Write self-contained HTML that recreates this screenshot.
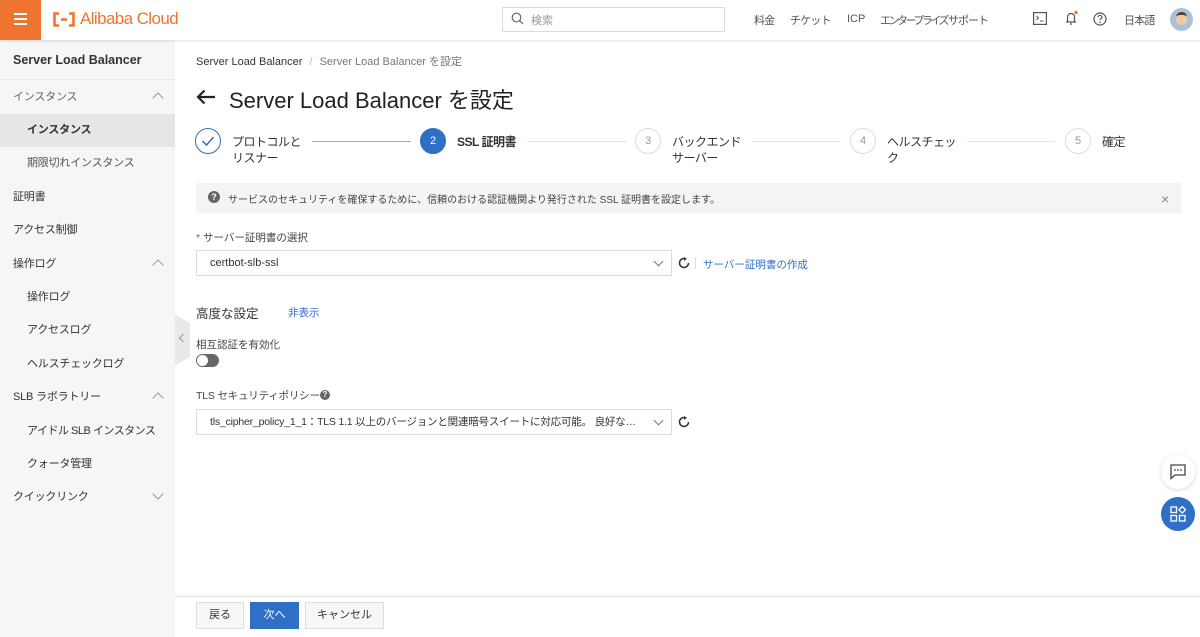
<!DOCTYPE html>
<html><head><meta charset="utf-8"><style>
*{box-sizing:border-box;margin:0;padding:0}
body{width:1200px;height:637px;overflow:hidden;position:relative;background:#fff;font-family:"Liberation Sans","Noto Sans CJK JP",sans-serif;color:#333;font-size:12px}
.a{position:absolute;white-space:nowrap}
.hdr{position:absolute;left:0;top:0;width:1200px;height:40px;background:#fff;box-shadow:0 1px 3px rgba(0,0,0,.12);z-index:5}
.nv{position:absolute;top:12px;font-size:11px;color:#555;letter-spacing:-0.8px;white-space:nowrap}
.side{position:absolute;left:0;top:40px;width:175px;height:597px;background:#f5f6f7}
.mi{position:absolute;left:0;width:175px;height:33px;line-height:33px;padding-left:13px;font-size:11px;letter-spacing:-0.2px;color:#333;white-space:nowrap}
.mi.s{padding-left:27px}
.chev{position:absolute;right:13px;top:13px;width:8px;height:8px;border-left:1px solid #999;border-top:1px solid #999;transform:rotate(45deg)}
.chev.d{transform:rotate(225deg);top:9px}
.circ{position:absolute;width:26px;height:26px;border-radius:50%;border:1px solid #ddd;color:#999;font-size:11px;text-align:center;line-height:24px;top:128px}
.st{position:absolute;font-size:12px;letter-spacing:-0.5px;color:#333;line-height:16px;top:134px;white-space:nowrap}
.ln{position:absolute;height:1px;top:141px;background:#e3e3e3}
.sel{position:absolute;left:196px;width:476px;height:26px;border:1px solid #dcdcdc;font-size:11px;line-height:24px;padding-left:13px;padding-right:30px;color:#333;white-space:nowrap;overflow:hidden;text-overflow:ellipsis}
.sel .v{position:absolute;right:9px;top:7px;width:7px;height:7px;border-right:1px solid #777;border-bottom:1px solid #777;transform:rotate(45deg)}
.btn{position:absolute;top:602px;height:27px;line-height:25px;text-align:center;border:1px solid #ddd;background:#f7f7f7;font-size:11px;color:#333}
</style></head><body>
<div class="hdr">
 <div class="a" style="left:0;top:0;width:41px;height:40px;background:#ef7430"></div>
 <div class="a" style="left:14px;top:13px;width:13px;height:2px;background:#fff;box-shadow:0 5px 0 #fff,0 10px 0 #fff"></div>
 <svg class="a" style="left:52px;top:12px" width="24" height="15" viewBox="0 0 24 15"><path d="M7 1.5H2.5v12H7M17 1.5h4.5v12H17M9 7.5h6" stroke="#ef7430" stroke-width="2.6" fill="none"/></svg>
 <div class="a" style="left:80px;top:9px;color:#ef7430;font-size:17px;letter-spacing:-0.6px">Alibaba Cloud</div>
 <div class="a" style="left:502px;top:7px;width:223px;height:25px;border:1px solid #ddd"></div>
 <svg class="a" style="left:511px;top:12px" width="13" height="13" viewBox="0 0 13 13"><circle cx="5.5" cy="5.5" r="4.3" fill="none" stroke="#666" stroke-width="1.2"/><path d="M8.7 8.7L12 12" stroke="#666" stroke-width="1.2"/></svg>
 <div class="a" style="left:531px;top:12px;color:#999;font-size:11px">検索</div>
 <div class="nv" style="left:754px">料金</div>
 <div class="nv" style="left:790px">チケット</div>
 <div class="nv" style="left:847px;letter-spacing:0;top:13px">ICP</div>
 <div class="nv" style="left:880px;letter-spacing:-2.5px">エンタープライズ</div>
 <div class="nv" style="left:948px;letter-spacing:-1px">サポート</div>
 <svg class="a" style="left:1033px;top:12px" width="14" height="13" viewBox="0 0 14 13"><rect x=".6" y=".6" width="12.8" height="11.8" fill="none" stroke="#555" stroke-width="1.2"/><path d="M3.5 4l2 2-2 2M7 9h3.5" stroke="#555" fill="none"/></svg>
 <svg class="a" style="left:1063px;top:10px" width="16" height="16" viewBox="0 0 16 16"><path d="M3 12h10M4.5 12V7a3.5 3.5 0 017 0v5M7 14h2" stroke="#555" fill="none" stroke-width="1.2"/><circle cx="13" cy="2.5" r="1.7" fill="#ef7430"/></svg>
 <svg class="a" style="left:1093px;top:12px" width="14" height="14" viewBox="0 0 14 14"><circle cx="7" cy="7" r="6" fill="none" stroke="#555" stroke-width="1.2"/><path d="M5 5.3a2 2 0 114 0c0 1.2-2 1.4-2 2.8" stroke="#555" fill="none" stroke-width="1.2"/><circle cx="7" cy="10.3" r=".8" fill="#555"/></svg>
 <div class="nv" style="left:1124px">日本語</div>
 <div class="a" style="left:1170px;top:8px;width:23px;height:23px;border-radius:50%;background:#a9c2d6;overflow:hidden"><div style="position:absolute;left:6px;top:4px;width:11px;height:13px;border-radius:5px;background:#f1c9a6;border-top:3px solid #5a4030"></div></div>
</div>
<div class="side">
 <div class="a" style="left:13px;top:13px;font-size:12.5px;font-weight:bold;color:#333">Server Load Balancer</div>
 <div class="a" style="left:0;top:39px;width:175px;height:1px;background:#e8e8e8"></div>
 <div class="mi" style="top:41px;color:#666">インスタンス<span class="chev"></span></div>
 <div class="mi s" style="top:74px;background:#e5e6e8;font-weight:bold">インスタンス</div>
 <div class="mi s" style="top:107px;color:#555">期限切れインスタンス</div>
 <div class="mi" style="top:141px">証明書</div>
 <div class="mi" style="top:174px">アクセス制御</div>
 <div class="mi" style="top:208px">操作ログ<span class="chev"></span></div>
 <div class="mi s" style="top:241px">操作ログ</div>
 <div class="mi s" style="top:274px">アクセスログ</div>
 <div class="mi s" style="top:308px">ヘルスチェックログ</div>
 <div class="mi" style="top:341px">SLB ラボラトリー<span class="chev"></span></div>
 <div class="mi s" style="top:375px;letter-spacing:-0.5px">アイドル SLB インスタンス</div>
 <div class="mi s" style="top:408px">クォータ管理</div>
 <div class="mi" style="top:441px">クイックリンク<span class="chev d"></span></div>
</div>
<div class="a" style="left:175px;top:314px;width:15px;height:52px;background:#e8e9eb;clip-path:polygon(0 0,100% 18%,100% 82%,0 100%)"></div>
<div class="a" style="left:180px;top:335px;width:6px;height:6px;border-left:1px solid #999;border-bottom:1px solid #999;transform:rotate(45deg)"></div>

<div class="a" style="left:196px;top:53px;font-size:11px;color:#333">Server Load Balancer <span style="color:#bbb;margin:0 4px">/</span> <span style="color:#777">Server Load Balancer を設定</span></div>
<svg class="a" style="left:196px;top:89px" width="20" height="16" viewBox="0 0 20 16"><path d="M19 8H2M8.5 1.5L2 8l6.5 6.5" stroke="#222" stroke-width="2.2" fill="none"/></svg>
<div class="a" style="left:229px;top:83px;font-size:22px;color:#222">Server Load Balancer を設定</div>

<div class="circ" style="left:195px;border-color:#2f6fc5"></div>
<svg class="a" style="left:201px;top:135px" width="14" height="12" viewBox="0 0 14 12"><path d="M1.5 6l4 4L12.5 2" stroke="#2f6fc5" stroke-width="1.5" fill="none"/></svg>
<div class="st" style="left:232px">プロトコルと<br>リスナー</div>
<div class="ln" style="left:312px;width:99px;background:#8aaede"></div>
<div class="circ" style="left:420px;background:#2f6fc5;border-color:#2f6fc5;color:#fff">2</div>
<div class="st" style="left:457px;font-weight:bold">SSL 証明書</div>
<div class="ln" style="left:527px;width:99px"></div>
<div class="circ" style="left:635px">3</div>
<div class="st" style="left:672px">バックエンド<br>サーバー</div>
<div class="ln" style="left:752px;width:88px"></div>
<div class="circ" style="left:850px">4</div>
<div class="st" style="left:887px">ヘルスチェッ<br>ク</div>
<div class="ln" style="left:967px;width:88px"></div>
<div class="circ" style="left:1065px">5</div>
<div class="st" style="left:1102px">確定</div>

<div class="a" style="left:196px;top:183px;width:985px;height:30px;background:#f3f4f5"></div>
<div class="a" style="left:208px;top:191px;width:12px;height:12px;border-radius:50%;background:#666;color:#fff;font-size:9px;font-weight:bold;text-align:center;line-height:12px">?</div>
<div class="a" style="left:228px;top:191px;font-size:10px;color:#444">サービスのセキュリティを確保するために、信頼のおける認証機関より発行された SSL 証明書を設定します。</div>
<div class="a" style="left:1161px;top:191px;font-size:14px;color:#888">×</div>

<div class="a" style="left:196px;top:230px;font-size:10.5px;color:#444"><span style="color:#e0393e">*</span> サーバー証明書の選択</div>
<div class="sel" style="top:250px">certbot-slb-ssl<span class="v"></span></div>
<svg class="a" style="left:678px;top:257px" width="12" height="12" viewBox="0 0 12 12"><path d="M10.5 6A4.5 4.5 0 116.5 1.5" stroke="#333" stroke-width="1.5" fill="none"/><path d="M6 0l3 1.8L6 4z" fill="#333"/></svg>
<div class="a" style="left:695px;top:257px;width:1px;height:12px;background:#ddd"></div>
<div class="a" style="left:703px;top:257px;font-size:10.5px;color:#2f6fc5">サーバー証明書の作成</div>

<div class="a" style="left:196px;top:303px;font-size:12.5px;color:#333">高度な設定</div>
<div class="a" style="left:288px;top:305px;font-size:10.5px;color:#2f6fc5">非表示</div>
<div class="a" style="left:196px;top:337px;font-size:10.5px;color:#444">相互認証を有効化</div>
<div class="a" style="left:196px;top:354px;width:23px;height:13px;border-radius:7px;background:#666"><div style="position:absolute;left:1px;top:1px;width:11px;height:11px;border-radius:50%;background:#fff"></div></div>
<div class="a" style="left:196px;top:388px;font-size:10.5px;color:#444;letter-spacing:-0.2px">TLS セキュリティポリシー</div>
<div class="a" style="left:320px;top:390px;width:10px;height:10px;border-radius:50%;background:#666;color:#fff;font-size:8px;font-weight:bold;text-align:center;line-height:10px">?</div>
<div class="sel" style="top:409px;font-size:10.5px;letter-spacing:-0.2px">tls_cipher_policy_1_1：TLS 1.1 以上のバージョンと関連暗号スイートに対応可能。 良好な交換...<span class="v"></span></div>
<svg class="a" style="left:678px;top:416px" width="12" height="12" viewBox="0 0 12 12"><path d="M10.5 6A4.5 4.5 0 116.5 1.5" stroke="#333" stroke-width="1.5" fill="none"/><path d="M6 0l3 1.8L6 4z" fill="#333"/></svg>

<div class="a" style="left:1161px;top:455px;width:34px;height:34px;border-radius:50%;background:#fff;box-shadow:0 1px 5px rgba(0,0,0,.15)"></div>
<svg class="a" style="left:1170px;top:464px" width="16" height="16" viewBox="0 0 16 16"><path d="M1 1h14v10H5l-4 3.5z" fill="none" stroke="#444" stroke-width="1.3"/><circle cx="5" cy="6" r=".9" fill="#444"/><circle cx="8" cy="6" r=".9" fill="#444"/><circle cx="11" cy="6" r=".9" fill="#444"/></svg>
<div class="a" style="left:1161px;top:497px;width:34px;height:34px;border-radius:50%;background:#2f6fc5"></div>
<svg class="a" style="left:1170px;top:506px" width="16" height="16" viewBox="0 0 16 16"><g fill="none" stroke="#fff" stroke-width="1.3"><rect x="1" y="1" width="5.5" height="5.5"/><rect x="1" y="9.5" width="5.5" height="5.5"/><rect x="9.5" y="9.5" width="5.5" height="5.5"/><path d="M12.2 0.5l3.3 3.3-3.3 3.3-3.3-3.3z"/></g></svg>

<div class="a" style="left:175px;top:596px;width:1025px;height:41px;background:#fff;border-top:1px solid #e5e5e5;box-shadow:0 -1px 3px rgba(0,0,0,.05)"></div>
<div class="btn" style="left:196px;width:48px">戻る</div>
<div class="btn" style="left:250px;width:49px;background:#2f6fc5;border-color:#2f6fc5;color:#fff">次へ</div>
<div class="btn" style="left:305px;width:79px">キャンセル</div>
</body></html>
